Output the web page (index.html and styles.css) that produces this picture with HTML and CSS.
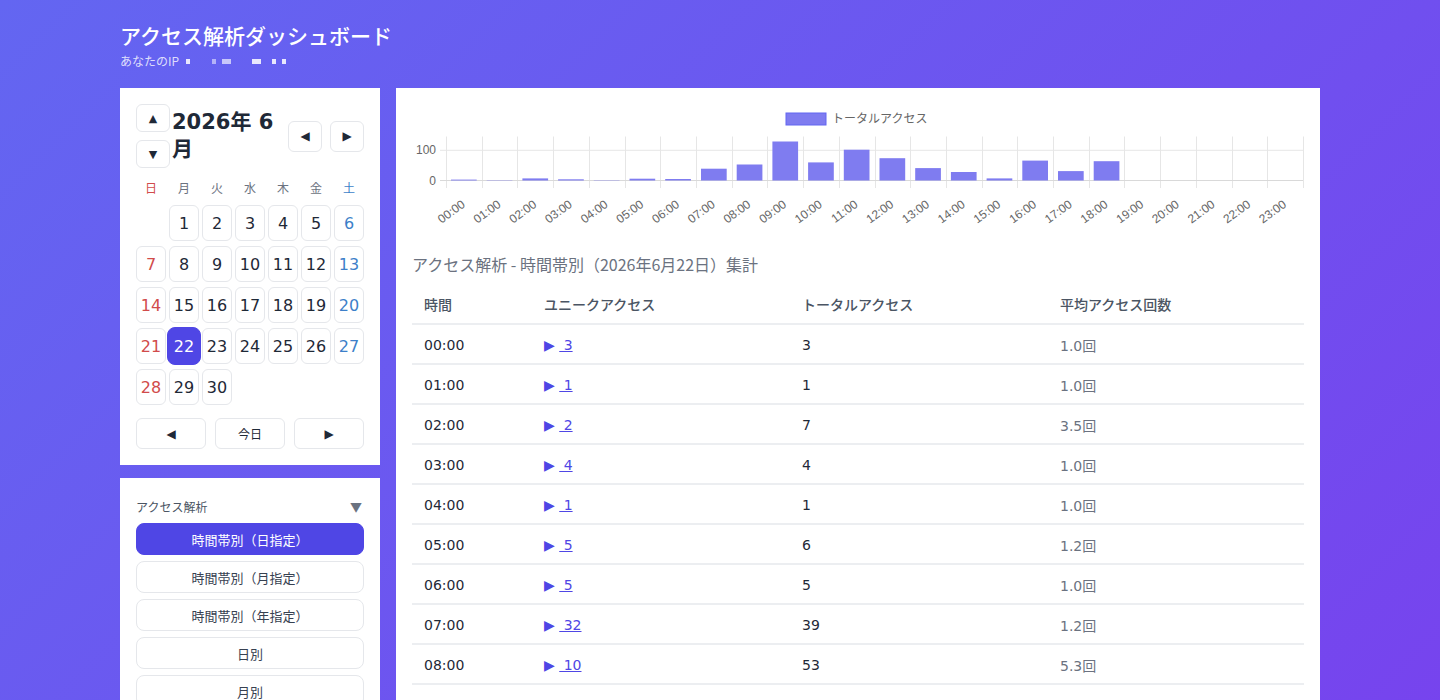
FILE: index.html
```html
<!DOCTYPE html>
<html lang="ja">
  <head>
    <meta charset="UTF-8" />
    <meta name="viewport" content="width=device-width, initial-scale=1.0" />
    <title>アクセス解析ダッシュボード</title>
    <link rel="stylesheet" href="styles.css">
  </head>
  <body>
    <div class="wrap">
      <header class="top">
        <h1>アクセス解析ダッシュボード</h1>
        <p class="ip">あなたのIP
          <span class="mask m1"></span>
          <span class="mask m2"></span>
          <span class="mask m3"></span>
          <span class="mask m4"></span>
          <span class="mask m5"></span>
          <span class="mask m6"></span>
        </p>
      </header>

      <div class="layout">
        <aside class="side">
          <div class="card cal">
            <div class="cal-head">
              <div class="updown">
                <button class="btn sm">▲</button>
                <button class="btn sm">▼</button>
              </div>
              <div class="cal-title">2026年 6 月</div>
              <div class="pn">
                <button class="btn nav">◀</button>
                <button class="btn nav">▶</button>
              </div>
            </div>
            <div class="week">
              <span class="sun">日</span><span>月</span><span>火</span><span>水</span><span>木</span><span>金</span><span class="sat">土</span>
            </div>
            <div class="days" id="days"></div>
            <div class="cal-foot">
              <button class="btn foot">◀</button>
              <button class="btn foot">今日</button>
              <button class="btn foot">▶</button>
            </div>
          </div>

          <div class="card menu">
            <div class="menu-head">
              <span>アクセス解析</span>
              <span class="caret">▼</span>
            </div>
            <button class="mbtn active">時間帯別（日指定）</button>
            <button class="mbtn">時間帯別（月指定）</button>
            <button class="mbtn">時間帯別（年指定）</button>
            <button class="mbtn">日別</button>
            <button class="mbtn">月別</button>
          </div>
        </aside>

        <main class="card main">
          <svg class="chart" id="chart" width="892" height="128" viewBox="0 0 892 128"></svg>

          <h2 class="sec">アクセス解析 - 時間帯別（2026年6月22日）集計</h2>
          <table class="tbl">
            <thead>
              <tr>
                <th class="c1">時間</th>
                <th class="c2">ユニークアクセス</th>
                <th class="c3">トータルアクセス</th>
                <th class="c4">平均アクセス回数</th>
              </tr>
            </thead>
            <tbody id="rows"></tbody>
          </table>
        </main>
      </div>
    </div>

    <script>
      // June 2026 starts on a Monday
      let days = document.getElementById("days");
      let html = '<span class="day empty"></span>';
      for (let d = 1; d <= 30; d++) {
        let dow = d % 7; // 0 = sunday
        let cls = "day";
        if (dow == 0) cls += " sun";
        if (dow == 6) cls += " sat";
        if (d == 22) cls += " sel";
        html += '<span class="' + cls + '">' + d + "</span>";
      }
      days.innerHTML = html;

      let uniq = [3, 1, 2, 4, 1, 5, 5, 32, 10, 11, 41, 28, 30, 22, 15, 4, 27, 18, 25, 0, 0, 0, 0, 0];
      let total = [3, 1, 7, 4, 1, 6, 5, 39, 53, 129, 60, 102, 74, 41, 28, 7, 66, 31, 64, 0, 0, 0, 0, 0];

      let pad = (n) => (n < 10 ? "0" + n : "" + n) + ":00";

      let rows = document.getElementById("rows");
      let r = "";
      for (let h = 0; h < 24; h++) {
        let avg = uniq[h] ? (total[h] / uniq[h]).toFixed(1) : "0.0";
        r += "<tr><td>" + pad(h) + "</td>" +
          '<td><span class="arrow">▶</span> <a href="#"> ' + uniq[h] + "</a></td>" +
          "<td>" + total[h] + "</td>" +
          '<td class="avg">' + avg + "回</td></tr>";
      }
      rows.innerHTML = r;

      // bar chart
      let svg = document.getElementById("chart");
      let plotL = 34, plotR = 891, baseY = 76.5, plotT = 32.5;
      let step = (plotR - plotL) / 24;
      let per = 0.302;
      let s = "";
      s += '<rect x="374" y="9" width="40" height="12" fill="#7f7cf0" stroke="#6366f1" stroke-width="1"/>';
      s += '<text x="420" y="19" class="lg">トータルアクセス</text>';
      for (let i = 0; i <= 24; i++) {
        let x = Math.round(plotL + step * i) + 0.5;
        s += '<line x1="' + x + '" y1="' + plotT + '" x2="' + x + '" y2="84" class="grid"/>';
      }
      let y100 = (baseY - 100 * per).toFixed(1);
      s += '<line x1="' + (plotL - 6) + '" y1="' + y100 + '" x2="' + plotR + '" y2="' + y100 + '" class="grid"/>';
      s += '<line x1="' + (plotL - 6) + '" y1="' + baseY + '" x2="' + plotR + '" y2="' + baseY + '" class="axis"/>';
      s += '<text x="24" y="' + (baseY - 100 * per + 4).toFixed(1) + '" class="tick" text-anchor="end">100</text>';
      s += '<text x="24" y="' + (baseY + 4) + '" class="tick" text-anchor="end">0</text>';
      for (let i = 0; i < 24; i++) {
        let cx = plotL + step * (i + 0.5);
        let bw = step * 0.72;
        let bh = total[i] * per;
        if (total[i] > 0) {
          s += '<rect x="' + (cx - bw / 2).toFixed(1) + '" y="' + (baseY - bh).toFixed(1) + '" width="' + bw.toFixed(1) + '" height="' + bh.toFixed(1) + '" class="bar"/>';
        }
        s += '<text class="tick" text-anchor="end" transform="translate(' + (cx + 2).toFixed(1) + ' 102) rotate(-36)">' + pad(i) + "</text>";
      }
      svg.innerHTML = s;
    </script>
  </body>
</html>
```

FILE: styles.css
```css
* {
  margin: 0;
  padding: 0;
  box-sizing: border-box;
}
body {
  min-height: 100vh;
  font-family: "DejaVu Sans", "Noto Sans CJK JP", sans-serif;
  color: #1f2937;
  background: linear-gradient(135deg, #6366f1 0%, #7c3aed 100%);
}
.wrap {
  width: 1200px;
  margin: 0 auto;
  padding-top: 20px;
}
.top h1 {
  font-family: "Noto Sans CJK JP", sans-serif;
  font-size: 21px;
  font-weight: 500;
  line-height: 30px;
  color: #fff;
}
.ip {
  margin-top: 2px;
  font-family: "Noto Sans CJK JP", sans-serif;
  font-size: 12px;
  line-height: 18px;
  color: rgba(255, 255, 255, 0.8);
  display: flex;
  align-items: center;
}
.mask {
  display: inline-block;
  height: 5px;
  background: rgba(255, 255, 255, 0.85);
}
.m1 { width: 4px; margin-left: 7px; }
.m2 { width: 4px; margin-left: 22px; opacity: 0.6; }
.m3 { width: 9px; margin-left: 6px; opacity: 0.75; }
.m4 { width: 9px; margin-left: 21px; }
.m5 { width: 4px; margin-left: 11px; }
.m6 { width: 4px; margin-left: 6px; }

.layout {
  display: flex;
  gap: 16px;
  margin-top: 18px;
  align-items: flex-start;
}
.side {
  width: 260px;
  display: flex;
  flex-direction: column;
  gap: 13px;
}
.card {
  background: #fff;
  padding: 16px;
}
.btn {
  background: #fff;
  border: 1px solid #e5e7eb;
  border-radius: 6px;
  color: #1f2937;
  font-family: "DejaVu Sans", "Noto Sans CJK JP", sans-serif;
  font-size: 12px;
  cursor: pointer;
}

/* calendar */
.cal-head {
  display: flex;
  align-items: center;
  height: 64px;
}
.updown {
  display: flex;
  flex-direction: column;
  gap: 8px;
}
.btn.sm {
  width: 34px;
  height: 28px;
  font-size: 11px;
}
.cal-title {
  flex: 1;
  padding-left: 2px;
  font-size: 21px;
  font-weight: bold;
  line-height: 27px;
  width: 100px;
  max-width: 110px;
}
.pn {
  display: flex;
  gap: 8px;
  margin-left: auto;
}
.btn.nav {
  width: 34px;
  height: 31px;
}
.week {
  display: grid;
  grid-template-columns: repeat(7, 30px);
  column-gap: 3px;
  margin-top: 12px;
  font-family: "Noto Sans CJK JP", sans-serif;
  font-size: 12px;
  line-height: 16px;
  color: #6b7280;
  text-align: center;
}
.week .sun { color: #d14b4b; }
.week .sat { color: #3d7fc9; }
.days {
  display: grid;
  grid-template-columns: repeat(7, 30px);
  grid-auto-rows: 36px;
  column-gap: 3px;
  row-gap: 5px;
  margin-top: 9px;
}
.day {
  display: flex;
  align-items: center;
  justify-content: center;
  border: 1px solid #e5e7eb;
  border-radius: 6px;
  font-size: 16px;
  color: #1f2937;
}
.day.empty { border: none; }
.day.sun { color: #d14b4b; }
.day.sat { color: #3d7fc9; }
.day.sel {
  background: #4f46e5;
  border-color: #4f46e5;
  color: #fff;
  border-radius: 8px;
  margin: -1px -2px;
}
.cal-foot {
  display: flex;
  gap: 9px;
  margin-top: 13px;
}
.btn.foot {
  width: 70px;
  height: 31px;
  font-size: 12px;
}

/* menu */
.menu-head {
  display: flex;
  justify-content: space-between;
  align-items: center;
  height: 24px;
  font-family: "Noto Sans CJK JP", sans-serif;
  font-size: 12px;
  color: #4b5563;
  margin-bottom: 5px;
}
.caret {
  font-size: 12px;
  color: #6b7280;
  padding-right: 2px;
}
.mbtn {
  display: block;
  width: 100%;
  height: 32px;
  margin-bottom: 6px;
  background: #fff;
  border: 1px solid #e5e7eb;
  border-radius: 8px;
  font-family: "Noto Sans CJK JP", sans-serif;
  font-size: 13px;
  color: #374151;
}
.mbtn.active {
  background: #4f46e5;
  border-color: #4f46e5;
  color: #fff;
}

/* main */
.main {
  flex: 1;
  min-height: 700px;
}
.chart {
  display: block;
  font-family: "Liberation Sans", Arial, sans-serif;
}
.chart .grid { stroke: #e6e6e6; stroke-width: 1; }
.chart .axis { stroke: #d9d9d9; stroke-width: 1; }
.chart .bar { fill: #7f7cf0; }
.chart .tick { fill: #666; font-size: 12px; }
.chart .lg {
  fill: #666;
  font-size: 12px;
  font-family: "Noto Sans CJK JP", sans-serif;
}
.sec {
  margin-top: 20px;
  font-family: "Noto Sans CJK JP", sans-serif;
  font-size: 16px;
  font-weight: normal;
  line-height: 24px;
  color: #6b7280;
}
.tbl {
  width: 100%;
  margin-top: 8px;
  border-collapse: collapse;
  font-size: 14px;
}
.tbl th {
  height: 40px;
  padding: 0 12px;
  text-align: left;
  font-family: "Noto Sans CJK JP", sans-serif;
  font-size: 14px;
  font-weight: 500;
  color: #4b5563;
  border-bottom: 2px solid #eceef1;
}
.tbl td {
  height: 40px;
  padding: 2px 12px 0;
  border-bottom: 2px solid #eceef1;
  color: #1f2937;
}
.c1 { width: 120px; }
.c2 { width: 258px; }
.c3 { width: 258px; }
.tbl td.avg {
  color: #6b7280;
}
.arrow {
  color: #4f46e5;
  font-size: 14px;
}
.tbl a {
  color: #4f46e5;
  white-space: pre;
}
```
